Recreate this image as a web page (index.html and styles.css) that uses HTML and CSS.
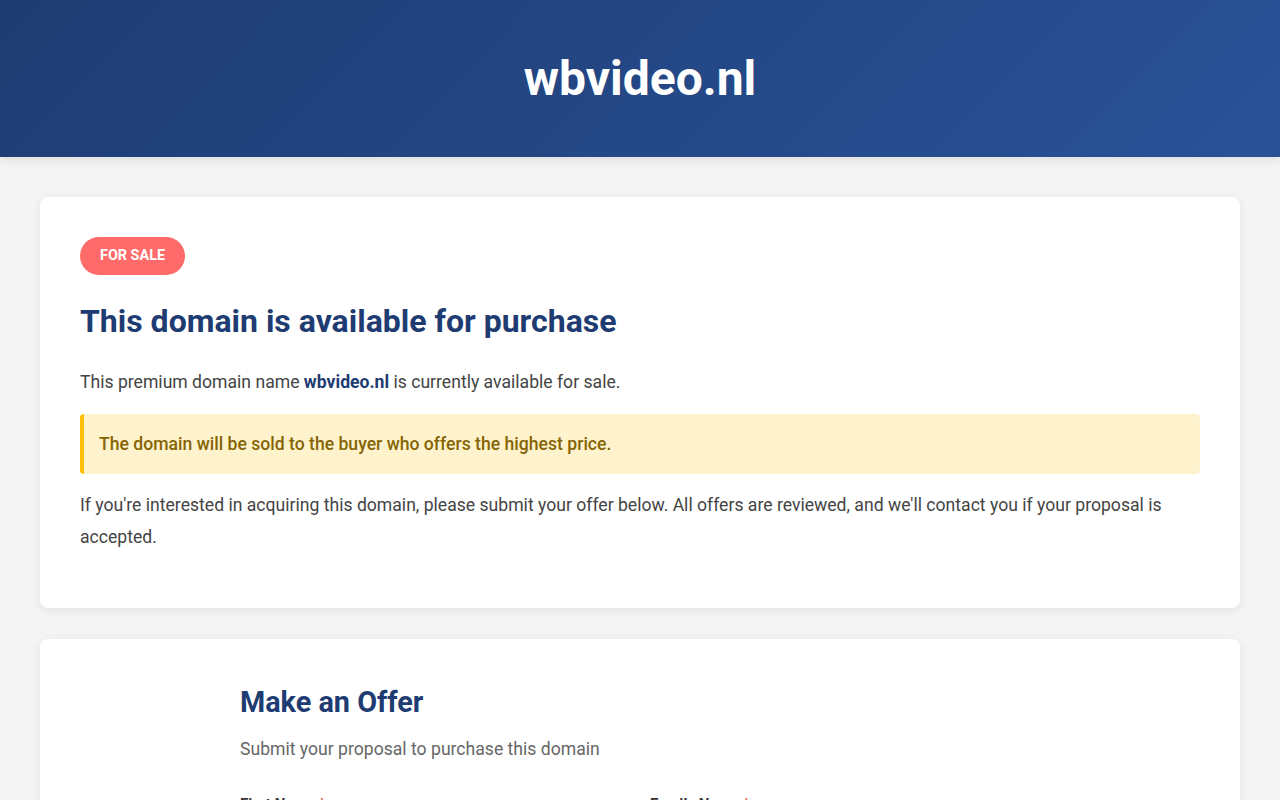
FILE: index.html
```html
<!DOCTYPE html>
<html lang="en">
<head>
<meta charset="utf-8">
<title>wbvideo.nl - Domain for sale</title>
<link rel="stylesheet" href="styles.css">
</head>
<body>
<header class="site-header">
  <h1 class="site-title">wbvideo.nl</h1>
</header>
<main class="container">
  <section class="card">
    <span class="badge">FOR SALE</span>
    <h2 class="card-title">This domain is available for purchase</h2>
    <p class="text">This premium domain name <strong class="domain">wbvideo.nl</strong> is currently available for sale.</p>
    <div class="notice">The domain will be sold to the buyer who offers the highest price.</div>
    <p class="text text-last">If you're interested in acquiring this domain, please submit your offer below. All offers are reviewed, and we'll contact you if your proposal is accepted.</p>
  </section>
  <section class="card">
    <div class="offer">
      <h2 class="offer-title">Make an Offer</h2>
      <p class="offer-sub">Submit your proposal to purchase this domain</p>
      <form class="form-grid">
        <div class="field">
          <label class="label">First Name <span class="req">*</span></label>
          <input class="input" type="text">
        </div>
        <div class="field">
          <label class="label">Family Name <span class="req">*</span></label>
          <input class="input" type="text">
        </div>
      </form>
    </div>
  </section>
</main>
</body>
</html>
```
FILE: styles.css
```css
* { box-sizing: border-box; }
html, body { margin: 0; padding: 0; }
body {
  background: #f4f4f4;
  font-family: Roboto, "Liberation Sans", Arial, sans-serif;
  color: #444;
}
.site-header {
  background: linear-gradient(135deg, #1e3c72 0%, #2a5298 100%);
  padding: 50px 20px;
  text-align: center;
  box-shadow: 0 2px 10px rgba(0,0,0,0.1);
}
.site-title {
  margin: 0;
  color: #fff;
  font-size: 48px;
  line-height: 57px;
  font-weight: 700;
}
.container {
  max-width: 1200px;
  margin: 40px auto 0;
  display: flex;
  flex-direction: column;
  gap: 31px;
}
.card {
  background: #fff;
  border-radius: 8px;
  padding: 40px;
  box-shadow: 0 2px 10px rgba(0,0,0,0.08);
}
.badge {
  display: inline-block;
  background: #ff6b6b;
  color: #fff;
  font-size: 14.4px;
  font-weight: 700;
  line-height: 18px;
  padding: 10px 20px;
  border-radius: 20px;
}
.card-title {
  margin: 27px 0 27px;
  color: #1e3c72;
  font-size: 32px;
  line-height: 1.2;
  font-weight: 700;
}
.text {
  margin: 0 0 15px;
  font-size: 17.6px;
  line-height: 1.8;
  color: #444;
}
.text-last { margin: 16px 0 15px; }
.domain { color: #1e3c72; font-weight: 700; }
.notice {
  background: #fff3cd;
  border-left: 4px solid #ffc107;
  border-radius: 4px;
  padding: 15px;
  color: #856404;
  font-size: 17.6px;
  font-weight: 500;
  line-height: 30px;
}
.offer {
  max-width: 800px;
  margin: 0 auto;
}
.offer-title {
  margin: 6px 0 15px;
  color: #1e3c72;
  font-size: 28.8px;
  line-height: 1.2;
  font-weight: 700;
}
.offer-sub {
  margin: 0 0 32px;
  color: #666;
  font-size: 17.6px;
  line-height: 1.6;
}
.form-grid {
  display: grid;
  grid-template-columns: 1fr 1fr;
  gap: 20px;
}
.field { display: flex; flex-direction: column; gap: 8px; }
.label {
  font-size: 15.2px;
  font-weight: 700;
  color: #333;
}
.req { color: #e74c3c; }
.input {
  height: 44px;
  border: 1px solid #ddd;
  border-radius: 4px;
  padding: 10px;
  font-size: 16px;
}
```
